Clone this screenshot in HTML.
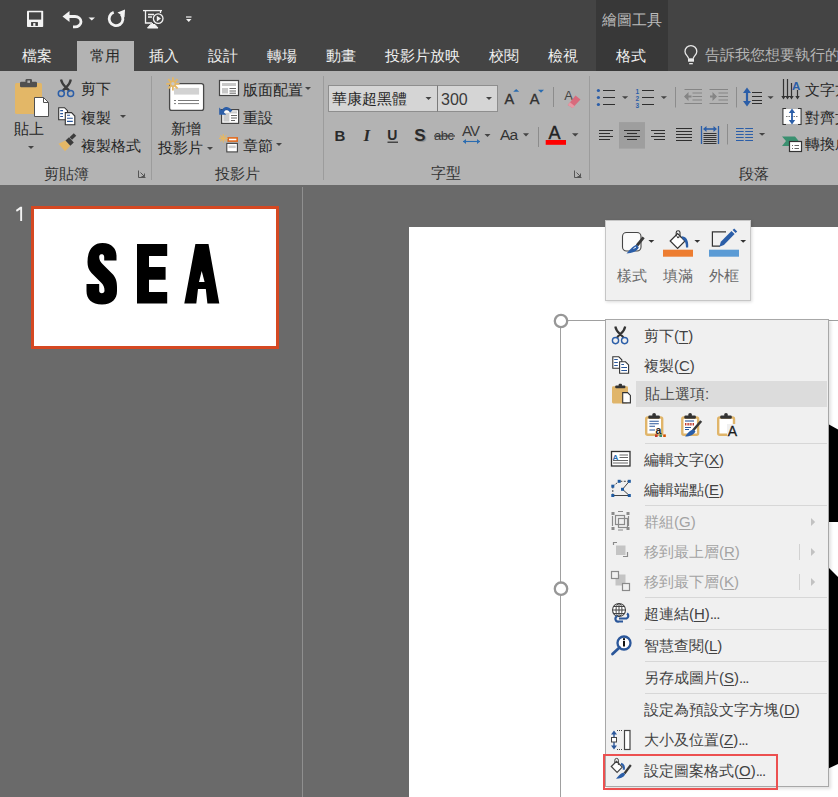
<!DOCTYPE html>
<html><head><meta charset="utf-8">
<style>
html,body{margin:0;padding:0;}
body{width:838px;height:797px;overflow:hidden;position:relative;background:#6a6a6a;font-family:"Liberation Sans",sans-serif;}
.a{position:absolute;}
svg{position:absolute;overflow:visible;}
.tab{position:absolute;top:45px;height:22px;line-height:22px;font-size:15px;color:#f0f0f0;white-space:nowrap;}
.rt{position:absolute;font-size:15px;line-height:20px;color:#262626;white-space:nowrap;}
.gl{position:absolute;font-size:15px;line-height:20px;color:#333;white-space:nowrap;}
.sep{position:absolute;width:1px;background:#9c9c9c;}
.mi{position:absolute;left:644px;margin-top:-1px;font-size:15px;line-height:20px;color:#424242;white-space:nowrap;}
.mi.dis{color:#a3a3a3;}
.dots{letter-spacing:-1px;}
.ms{position:absolute;left:645px;width:182px;height:1px;background:#d7d7d7;}
u{text-decoration:underline;text-underline-offset:2px;}
</style></head><body>
<!-- title bar -->
<div class="a" style="left:0;top:0;width:838px;height:71px;background:#444444"></div>
<div class="a" style="left:596px;top:0;width:72px;height:71px;background:#383838"></div>
<div class="a" style="left:77px;top:41px;width:57px;height:30px;background:#b3b3b3"></div>
<!-- ribbon -->
<div class="a" style="left:0;top:71px;width:838px;height:114px;background:#b3b3b3"></div>
<!-- panel divider -->
<div class="a" style="left:302px;top:187px;width:1px;height:610px;background:#8f8f8f"></div>

<!-- tabs -->
<div class="tab" style="left:22px">檔案</div>
<div class="tab" style="left:90px;color:#262626">常用</div>
<div class="tab" style="left:149px">插入</div>
<div class="tab" style="left:208px">設計</div>
<div class="tab" style="left:267px">轉場</div>
<div class="tab" style="left:326px">動畫</div>
<div class="tab" style="left:385px">投影片放映</div>
<div class="tab" style="left:489px">校閱</div>
<div class="tab" style="left:548px">檢視</div>
<div class="tab" style="left:616px">格式</div>
<div class="a" style="left:602px;top:9px;font-size:15px;line-height:22px;color:#bcbcbc;white-space:nowrap">繪圖工具</div>
<div class="tab" style="left:705px;top:44px;color:#b4b4b4">告訴我您想要執行的</div>


<!-- QAT icons -->
<svg style="left:0;top:0" width="200" height="40">
 <rect x="27" y="10.8" width="16.2" height="16.3" rx="0.8" fill="#f4f4f4"/>
 <rect x="29" y="12.3" width="12.2" height="7.3" fill="#444"/>
 <rect x="31.1" y="22.1" width="6.8" height="3.8" fill="#3a3a3a"/>
 <rect x="33.2" y="23.1" width="2.2" height="2.8" fill="#f4f4f4"/>
 <path d="M62.5 16.5 L69.5 11 L69.5 22 Z" fill="#f2f2f2"/>
 <path d="M68 16.5 H75 A6 5.2 0 0 1 75 26.9 H73" fill="none" stroke="#f2f2f2" stroke-width="2.8"/>
 <path d="M88.5 17.5 H95 L91.75 20.5 Z" fill="#f2f2f2"/>
 <path d="M113.7 12.3 A6.9 6.9 0 1 0 121.2 14.2" fill="none" stroke="#f2f2f2" stroke-width="2.8"/>
 <path d="M117.5 12.5 L125 9.5 L124.5 17.5 Z" fill="#f2f2f2"/>
 <g fill="none" stroke="#f2f2f2" stroke-width="1.3">
  <path d="M143 10.6 H162"/>
  <path d="M145.5 11 V23 H152"/>
  <path d="M160.5 11 V13"/>
  <path d="M148 14.5 H154 M148 17 H152"/>
  <circle cx="158.2" cy="18.6" r="4.8"/>
 </g>
 <path d="M156.8 15.8 L161 18.6 L156.8 21.4 Z" fill="#f2f2f2"/>
 <path d="M152.5 23 V25 M147.5 28 L150.5 24.5 H155 L158 28 Z" fill="#f2f2f2" stroke="#f2f2f2" stroke-width="1"/>
 <path d="M186 17 H191.5" stroke="#f2f2f2" stroke-width="1.2"/>
 <path d="M186 19 H191.5 L188.75 22 Z" fill="#f2f2f2"/>
</svg>

<!-- ribbon: clipboard -->
<div class="rt" style="left:14px;top:119px">貼上</div>
<div class="rt" style="left:81px;top:79px">剪下</div>
<div class="rt" style="left:81px;top:108px">複製</div>
<div class="rt" style="left:81px;top:136px">複製格式</div>
<div class="gl" style="left:44px;top:164px">剪貼簿</div>
<div class="sep" style="left:151px;top:76px;height:104px"></div>
<!-- slides -->
<div class="rt" style="left:171px;top:119px">新增</div>
<div class="rt" style="left:158px;top:138px">投影片</div>
<div class="rt" style="left:243px;top:80px">版面配置</div>
<div class="rt" style="left:243px;top:108px">重設</div>
<div class="rt" style="left:243px;top:136px">章節</div>
<div class="gl" style="left:215px;top:164px">投影片</div>
<div class="sep" style="left:323px;top:76px;height:104px"></div>
<!-- font -->
<div class="a" style="left:328px;top:85px;width:108px;height:25px;border:1px solid #8e8e8e;background:#d5d5d5"></div>
<div class="a" style="left:437px;top:85px;width:59px;height:25px;border:1px solid #8e8e8e;border-left-color:#7a7a7a;background:#d5d5d5"></div>
<div class="rt" style="left:332px;top:89px">華康超黑體</div>
<div class="rt" style="left:441px;top:90px;font-size:16px;color:#3a3a3a">300</div>
<div class="gl" style="left:431px;top:163px">字型</div>
<div class="sep" style="left:589px;top:76px;height:104px"></div>
<!-- paragraph -->
<div class="rt" style="left:805px;top:80px">文字方向</div>
<div class="rt" style="left:805px;top:108px">對齊文字</div>
<div class="rt" style="left:805px;top:134px">轉換成</div>
<div class="gl" style="left:739px;top:164px">段落</div>

<!-- ribbon icons -->
<svg style="left:0;top:70px" width="838" height="115">
 <defs>
  <path id="dd" d="M0 0H6L3 3Z" fill="#444"/>
 </defs>
 <!-- paste -->
 <rect x="15" y="13" width="27" height="31" rx="1.5" fill="#e3b767"/>
 <rect x="20" y="11.8" width="17" height="5.4" rx="1.2" fill="#505050"/>
 <rect x="25.5" y="9" width="6.5" height="4" rx="1.2" fill="#505050"/>
 <rect x="27.4" y="10.5" width="2.6" height="2.4" fill="#b0b0b0"/>
 <path d="M34.5 27.5 H43.5 L48.5 32.5 V46.5 H34.5 Z" fill="#fff" stroke="#505050" stroke-width="1"/>
 <path d="M43.5 27.5 V32.5 H48.5" fill="none" stroke="#505050" stroke-width="1"/>
 <use href="#dd" x="28" y="76"/>
 <!-- scissors -->
 <path d="M61 9.5 Q62 14 66 17.5 Q69 20 69.5 21.5 M70.8 9.5 Q70 14 66 17.5 Q63 20 62.5 21.5" fill="none" stroke="#3c3c3c" stroke-width="2.3"/>
 <circle cx="61.3" cy="23.6" r="3" fill="none" stroke="#2b5ea8" stroke-width="1.5"/>
 <circle cx="70.6" cy="23.6" r="3" fill="none" stroke="#2b5ea8" stroke-width="1.5"/>
 <!-- copy -->
 <path d="M58.7 37.7 H64.5 L67.5 40.7 V49.7 H58.7 Z" fill="#fff" stroke="#333" stroke-width="1.1"/>
 <path d="M60.2 40.6 H63 M60.2 43.6 H63 M60.2 46.5 H63" stroke="#2b579a" stroke-width="1.1"/>
 <path d="M65.3 42.6 H71.5 L74.8 46 V54.7 H65.3 Z" fill="#fff" stroke="#333" stroke-width="1.1"/>
 <path d="M67 45.2 H70 M67 48.2 H72.8 M67 51.4 H72.8" stroke="#2b579a" stroke-width="1.1"/>
 <use href="#dd" x="120" y="45"/>
 <!-- format painter -->
 <path d="M58.5 73.8 L65.5 70.5 L70.3 75.8 L65 81.2 Z" fill="#e3b767"/>
 <path d="M65.5 70.5 L70.3 75.8 L73.8 72.5 L69 67.2 Z" fill="#3c3c3c"/>
 <path d="M70.8 68.5 L75 64.5" stroke="#3c3c3c" stroke-width="3.6"/>
 <!-- launcher -->
 <path d="M138.5 100.5 V107.5 H145.5" fill="none" stroke="#555" stroke-width="1"/>
 <path d="M140.5 102.5 L144.5 106.5 M144.5 103.5 V106.5 H141.5" fill="none" stroke="#555" stroke-width="1"/>

 <!-- new slide -->
 <rect x="169.6" y="13.6" width="34" height="26.8" rx="2.2" fill="#fff" stroke="#484848" stroke-width="1.3"/>
 <rect x="174" y="17.9" width="25.1" height="6.7" fill="#d2d2d2"/>
 <path d="M174 30.5 H176 M178 30.5 H199 M174 33.6 H176 M178 33.6 H199" stroke="#6a6a6a" stroke-width="0.9"/>
 <g stroke="#e3b767" stroke-width="1.8">
  <path d="M172.9 7.2 V20.4 M166.3 13.8 H179.5 M168.2 9.1 L177.6 18.5 M177.6 9.1 L168.2 18.5"/>
 </g>
 <circle cx="172.9" cy="13.8" r="3.2" fill="#e3b767"/>
 <circle cx="172.9" cy="13.8" r="1.7" fill="#c9c9c9"/>
 <use href="#dd" x="207" y="77"/>
 <!-- layout -->
 <rect x="219.5" y="10.5" width="19" height="15" fill="#fff" stroke="#444" stroke-width="1.2"/>
 <rect x="222" y="13" width="14" height="3" fill="#c8c8c8"/>
 <rect x="222" y="18" width="6" height="5.5" fill="#c8c8c8"/>
 <path d="M229.5 18.5 H236 M229.5 21 H236 M229.5 23.2 H236" stroke="#555" stroke-width="0.9"/>
 <use href="#dd" x="305" y="17"/>
 <!-- reset -->
 <rect x="221.6" y="39.6" width="17" height="13.8" fill="#fff" stroke="#444" stroke-width="1.2"/>
 <rect x="223.4" y="42.8" width="6" height="8.8" fill="#cdcdcd"/>
 <rect x="229.4" y="41.3" width="7.6" height="2.2" fill="#cdcdcd"/>
 <path d="M231 45.5 H237 M231 48 H237 M231 50.5 H235" stroke="#555" stroke-width="0.9"/>
 <path d="M222 43 Q225.5 34.5 231.3 41.5" fill="none" stroke="#2b5ea8" stroke-width="2.8"/>
 <path d="M219.2 37.5 V44.8 H226.2 Z" fill="#2b5ea8"/>
 <!-- section -->
 <rect x="228.2" y="67.9" width="9" height="3.2" fill="#fff" stroke="#e06a1e" stroke-width="1.6"/>
 <rect x="226.8" y="73.4" width="10.6" height="8.5" fill="#fff" stroke="#444" stroke-width="1.1"/>
 <rect x="228.5" y="75.5" width="7.2" height="2.6" fill="#cfcfcf"/>
 <g stroke="#e3b767" stroke-width="1.2">
  <path d="M223.3 64 V72.6 M219 68.3 H227.6 M220.3 65.3 L226.3 71.3 M226.3 65.3 L220.3 71.3"/>
 </g>
 <circle cx="223.3" cy="68.3" r="1.8" fill="#e3b767"/>
 <use href="#dd" x="276" y="73"/>
</svg>

<!-- thumbnail -->
<svg style="left:0;top:0" width="40" height="240"><path d="M15.9 209.9 L20.3 206.7 H22.1 V221.1 H20.2 V209.4 L16.8 211.7 Z" fill="#f2f2f2"/></svg>
<div class="a" style="left:31px;top:206px;width:242px;height:137px;border:3px solid #d54822;background:#fff"></div>
<svg style="left:0;top:0" width="300" height="360">
 <path fill="#000" d="M87.5 262 C87.5 250 93 243 102.5 243 C112 243 116.5 249 116.5 256 V260.6 H104.2 V257 C104.2 255 103.2 254.2 101.7 254.2 C100.2 254.2 99.2 255 99.2 257 C99.2 260 100.5 262 103 264.5 L112 273.5 C115.5 277 117 281 117 287 V291 C117 299 112 304.5 102 304.5 C91.5 304.5 86.5 299 86.5 291 V284 H99.2 V290.5 C99.2 292.5 100.2 293.2 101.8 293.2 C103.5 293.2 104.5 292.5 104.5 290.5 C104.5 287 103.5 285 101 282.5 L91.5 273 C88.5 270 87.5 266 87.5 262 Z"/>
 <path fill="#000" d="M137 244 H167.2 V256.1 H149 V267 H165.6 V279.7 H149 V291.9 H167.2 V303.6 H137 Z"/>
 <path fill="#000" fill-rule="evenodd" d="M184.3 303.6 L195.4 244 H208.5 L219.3 303.6 H207.4 L205.8 289 H198 L196.3 303.6 Z M199 282 L201.7 271 L204.6 282 Z"/>
</svg>

<!-- slide -->
<div class="a" style="left:409px;top:227px;width:500px;height:600px;background:#fff"></div>
<svg style="left:0;top:0" width="838" height="797">
 <path d="M829 424.5 L838 429.5 V522 H829 Z" fill="#000"/>
 <path d="M829 568 L838 577 V764 L829 768.3 Z" fill="#000"/>
</svg>
<!-- selection -->
<div class="a" style="left:560px;top:320px;width:300px;height:1px;background:#a0a0a0"></div>
<div class="a" style="left:560px;top:320px;width:1px;height:500px;background:#a0a0a0"></div>
<svg style="left:0;top:0" width="838" height="797">
 <circle cx="561" cy="321" r="6.2" fill="#fff" stroke="#979797" stroke-width="2.3"/>
 <circle cx="561" cy="588.7" r="6.2" fill="#fff" stroke="#979797" stroke-width="2.3"/>
</svg>

<!-- mini toolbar -->
<div class="a" style="left:605px;top:220px;width:144px;height:79px;border:1px solid #c6c6c6;background:#f0f0f0;box-shadow:1px 1px 3px rgba(0,0,0,0.15)"></div>
<div class="a" style="left:617px;top:266px;font-size:15px;line-height:20px;color:#6a6a6a;white-space:nowrap">樣式</div>
<div class="a" style="left:663px;top:266px;font-size:15px;line-height:20px;color:#6a6a6a;white-space:nowrap">填滿</div>
<div class="a" style="left:709px;top:266px;font-size:15px;line-height:20px;color:#6a6a6a;white-space:nowrap">外框</div>

<!-- context menu -->
<div class="a" style="left:605px;top:319px;width:222px;height:466px;border:1px solid #a8a8a8;background:#f0f0f0;box-shadow:2px 2px 3px rgba(0,0,0,0.12)"></div>
<div class="a" style="left:636px;top:381px;width:191px;height:25.5px;background:#dcdcdc"></div>
<div class="mi" style="top:327px">剪下(<u>T</u>)</div>
<div class="mi" style="top:357px">複製(<u>C</u>)</div>
<div class="mi" style="top:385px;left:645px;color:#4a4a4a">貼上選項:</div>
<div class="ms" style="top:443px"></div>
<div class="mi" style="top:451px">編輯文字(<u>X</u>)</div>
<div class="mi" style="top:481px">編輯端點(<u>E</u>)</div>
<div class="ms" style="top:505px"></div>
<div class="mi dis" style="top:513px">群組(<u>G</u>)</div>
<div class="mi dis" style="top:543px">移到最上層(<u>R</u>)</div>
<div class="mi dis" style="top:573px">移到最下層(<u>K</u>)</div>
<div class="ms" style="top:597px"></div>
<div class="mi" style="top:605px">超連結(<u>H</u>)<span class="dots">...</span></div>
<div class="ms" style="top:629px"></div>
<div class="mi" style="top:637px">智慧查閱(<u>L</u>)</div>
<div class="ms" style="top:661px"></div>
<div class="mi" style="top:669px">另存成圖片(<u>S</u>)<span class="dots">...</span></div>
<div class="ms" style="top:693px"></div>
<div class="mi" style="top:701px">設定為預設文字方塊(<u>D</u>)</div>
<div class="mi" style="top:731px">大小及位置(<u>Z</u>)<span class="dots">...</span></div>
<div class="mi" style="top:762px">設定圖案格式(<u>O</u>)<span class="dots">...</span></div>
<div class="a" style="left:603px;top:754px;width:171px;height:32px;border:2px solid #ec5050"></div>

<!-- menu icons -->
<svg style="left:0;top:0" width="838" height="797">
 <!-- mini toolbar -->
 <rect x="622.5" y="232.5" width="18.5" height="18.5" rx="4" fill="#fbfbfb" stroke="#454545" stroke-width="1.1"/>
 <path d="M637 245.5 L643.6 237.3" stroke="#3a3a3a" stroke-width="2.8"/>
 <path d="M637 244.8 C633.5 245.5 631 248.5 626.5 253.6 C632 253.3 636.5 251.5 638.8 247.8 Z" fill="#2b5ea8"/>
 <path d="M633.5 248.5 L636 247" stroke="#fff" stroke-width="1"/>
 <path d="M648.4 240 H654.3 L651.35 242.8 Z" fill="#333"/>
 <path d="M670.2 241 L677.6 233.6 L685 241 L677.6 248.4 Z" fill="#fff" stroke="#333" stroke-width="1.2"/>
 <path d="M676.2 236.5 V232.6 A1.9 1.9 0 0 1 680 232.6 V237.5" fill="none" stroke="#333" stroke-width="1.1"/>
 <circle cx="678" cy="237.2" r="1" fill="#333"/>
 <path d="M681.5 236.3 C686 236.3 688.8 240 688.2 247.6 L686 247.6 C686 243 685 240.5 682.5 239 Z" fill="#2b5ea8"/>
 <rect x="663" y="249.7" width="30" height="7" fill="#ed7d31"/>
 <path d="M694.4 240 H700.2 L697.3 242.8 Z" fill="#333"/>
 <path d="M726 231.8 H712.4 V246.2 H720" fill="none" stroke="#333" stroke-width="1.2"/>
 <path d="M719.4 246.7 L720.8 241.8 L731.5 231 L734.6 234.1 L723.9 244.9 Z" fill="#2b5ea8"/>
 <path d="M732.6 230 L734.2 228.4 L737.2 231.4 L735.6 233" fill="#2b5ea8"/>
 <rect x="709" y="249.7" width="30" height="7" fill="#5b9bd5"/>
 <path d="M740.3 240 H746.1 L743.2 242.8 Z" fill="#333"/>

 <!-- cut -->
 <path d="M615.3 326.5 Q616 330.5 620 334 Q623 336.5 623.5 338 M625.2 326.5 Q624.5 330.5 620.5 334 Q617.5 336.5 617 338" fill="none" stroke="#333" stroke-width="2.2"/>
 <circle cx="615.5" cy="340.6" r="3.1" fill="none" stroke="#2b5ea8" stroke-width="1.4"/>
 <circle cx="624.6" cy="340.6" r="3.1" fill="none" stroke="#2b5ea8" stroke-width="1.4"/>
 <!-- copy -->
 <path d="M612.8 356.8 H618.8 L621.8 359.8 V368.3 H612.8 Z" fill="#fff" stroke="#333" stroke-width="1.1"/>
 <path d="M614.2 359.5 H617.8 M614.2 362.5 H617.8 M614.2 365.5 H617.8" stroke="#2b579a" stroke-width="1.1"/>
 <path d="M619.6 361.8 H625.5 L628.6 364.9 V373.3 H619.6 Z" fill="#fff" stroke="#333" stroke-width="1.1"/>
 <path d="M621.3 364.5 H624 M621.3 367.5 H627 M621.3 370.5 H627" stroke="#2b579a" stroke-width="1.1"/>
 <!-- paste -->
 <rect x="612" y="386.2" width="16" height="17.2" rx="1.3" fill="#e0b56a"/>
 <rect x="615.2" y="385.6" width="10.2" height="2.6" rx="1" fill="#333"/>
 <rect x="618.6" y="383.8" width="3.4" height="2.8" rx="1" fill="#333"/>
 <path d="M622.7 392.6 H627.6 L630.4 395.4 V402.9 H622.7 Z" fill="#fff" stroke="#333" stroke-width="1.1"/>
 <!-- paste options -->
 <g>
  <rect x="646.2" y="417.5" width="16" height="17.2" rx="1.5" fill="#fff" stroke="#e0b56a" stroke-width="2.4"/>
  <rect x="648.3" y="415.6" width="11.6" height="3.2" rx="1.2" fill="#333"/>
  <circle cx="654.1" cy="415" r="1.9" fill="#333"/>
  <path d="M649.4 421.3 H658.8 M649.4 423.8 H658.8 M649.4 426.3 H655 M649.4 430 H655" stroke="#2b579a" stroke-width="1.1"/>
  <text x="655.6" y="433.8" font-family="Liberation Sans" font-weight="bold" font-size="10.5" fill="#222">a</text>
  <rect x="655" y="434.4" width="2.6" height="2.6" fill="#c0392b"/><rect x="659.4" y="434.4" width="2.6" height="2.6" fill="#3d8b6e"/><rect x="663.2" y="434.4" width="2.6" height="2.6" fill="#d35400"/>
 </g>
 <g>
  <rect x="682.3" y="417.5" width="15.8" height="17.2" rx="1.5" fill="#fff" stroke="#e0b56a" stroke-width="2.4"/>
  <rect x="684.3" y="415.6" width="11.6" height="3.2" rx="1.2" fill="#333"/>
  <circle cx="690.1" cy="415" r="1.9" fill="#333"/>
  <path d="M685 421 H694" stroke="#2b579a" stroke-width="1.1"/>
  <path d="M685 424.2 H694" stroke="#c0392b" stroke-width="2.6" stroke-dasharray="1 0.6"/>
  <path d="M685 427.5 H691 M685 429.5 H689" stroke="#2b579a" stroke-width="1.1"/>
  <path d="M693 430.5 L701.2 421" stroke="#3a3a3a" stroke-width="2.6"/>
  <path d="M693.5 429.5 C690 430 688 432.5 685.1 436.5 C690 436.5 694 434.5 695.5 431.5 Z" fill="#2b5ea8"/>
 </g>
 <g>
  <rect x="718.2" y="417.5" width="15.8" height="17.2" rx="1.5" fill="#fff" stroke="#e0b56a" stroke-width="2.4"/>
  <rect x="720.2" y="415.6" width="11.6" height="3.2" rx="1.2" fill="#333"/>
  <circle cx="726" cy="415" r="1.9" fill="#333"/>
  <rect x="727" y="424" width="11" height="13" fill="#f0f0f0"/>
  <text x="727.8" y="435.8" font-family="Liberation Sans" font-size="14" fill="#1a1a1a" stroke="#1a1a1a" stroke-width="0.3">A</text>
 </g>
 <!-- edit text -->
 <rect x="611.5" y="451.5" width="18.5" height="14.5" fill="#fff" stroke="#333" stroke-width="1.3"/>
 <text x="612.5" y="459.5" font-family="Liberation Sans" font-weight="bold" font-size="8" fill="#2b6cb0">A</text>
 <path d="M619.5 455 H628 M619.5 457.5 H628 M613 460.5 H628 M613 463 H628" stroke="#555" stroke-width="0.9"/>
 <!-- edit points -->
 <path d="M612.8 486.2 L619.2 481.3 M629.3 481.3 L619.2 481.3 M612.8 495.5 V486.2" fill="none" stroke="#444" stroke-width="1" stroke-dasharray="2 1.5"/>
 <path d="M629.3 481.3 L622.5 489.3 L629.3 495.5 H612.8" fill="none" stroke="#444" stroke-width="1"/>
 <g fill="#1f5aa0">
  <rect x="611.3" y="484.7" width="3" height="3"/><rect x="617.7" y="479.8" width="3" height="3"/><rect x="627.8" y="479.8" width="3" height="3"/>
  <rect x="621" y="487.8" width="3" height="3"/><rect x="611.3" y="494" width="3" height="3"/><rect x="627.8" y="494" width="3" height="3"/>
 </g>
 <!-- group (disabled) -->
 <g fill="none" stroke="#8a8a8a" stroke-width="1.2">
  <rect x="615.5" y="515.5" width="9" height="9"/>
  <path d="M612.5 516 V526 M618 511.5 H623 M628.5 516 V526 M618 530 H623"/>
  <rect x="618.5" y="518.5" width="9" height="9"/>
 </g>
 <g fill="#8a8a8a">
  <rect x="611.5" y="512" width="3" height="3"/><rect x="626.5" y="512" width="3" height="3"/>
  <rect x="611.5" y="527" width="3" height="3"/><rect x="626.5" y="527" width="3" height="3"/>
 </g>
 <!-- bring to front -->
 <path d="M613.5 545 V542.5 H617" fill="none" stroke="#8a8a8a" stroke-width="1.2"/>
 <path d="M627.5 552 V556.5 H623" fill="none" stroke="#8a8a8a" stroke-width="1.2"/>
 <rect x="616" y="545.5" width="9.5" height="9.5" fill="#c4c4c4"/>
 <!-- send to back -->
 <rect x="615.5" y="574.5" width="10" height="11" fill="#c4c4c4"/>
 <rect x="611.5" y="571.5" width="7" height="7" fill="#f0f0f0" stroke="#8a8a8a" stroke-width="1.2"/>
 <rect x="622.5" y="583.5" width="7" height="7" fill="#f0f0f0" stroke="#8a8a8a" stroke-width="1.2"/>
 <!-- submenu arrows -->
 <g fill="#c2c2c2"><path d="M811 518 L815.2 522 L811 526 Z"/><path d="M811 548 L815.2 552 L811 556 Z"/><path d="M811 578 L815.2 582 L811 586 Z"/></g>
 <path d="M799.5 544 V560 M799.5 574 V590" stroke="#d2d2d2" stroke-width="1"/>
 <!-- hyperlink -->
 <circle cx="619" cy="610" r="6.5" fill="#fff" stroke="#444" stroke-width="1.1"/>
 <path d="M612.5 610 H625.5 M613.5 606.5 H624.5 M613.5 613.5 H624.5 M619 603.5 V616.5" stroke="#444" stroke-width="1"/>
 <ellipse cx="619" cy="610" rx="3" ry="6.5" fill="none" stroke="#444" stroke-width="1"/>
 <path d="M619 618.5 H626 M617.5 616 A2.8 2.8 0 0 0 619 621.5 H623 M627 613.5 A2.8 2.8 0 0 1 626.5 618.5 H622.5" fill="none" stroke="#2b579a" stroke-width="2.2"/>
 <!-- smart lookup -->
 <circle cx="624" cy="643" r="6.5" fill="#fff" stroke="#2b579a" stroke-width="2.3"/>
 <path d="M619.5 647.5 L612.5 654" stroke="#2b579a" stroke-width="2.8" stroke-linecap="round"/>
 <rect x="623" y="641" width="2" height="5.5" fill="#111"/><rect x="623" y="638.2" width="2" height="2" fill="#111"/>
 <!-- size & position -->
 <path d="M614 733 V738 M614 742 V747" stroke="#2b579a" stroke-width="1.4"/>
 <path d="M611 734.5 L614 730.5 L617 734.5 Z M611 745.5 L614 749.5 L617 745.5 Z" fill="#2b579a"/>
 <rect x="611.5" y="737.5" width="5" height="4.5" fill="#fff" stroke="#444" stroke-width="1"/>
 <path d="M617 730.5 H623 M617 749.5 H623" stroke="#444" stroke-width="1" stroke-dasharray="1 1"/>
 <rect x="624.5" y="730.5" width="5.5" height="19" fill="#fff" stroke="#444" stroke-width="1.2"/>
 <!-- format shape -->
 <path d="M611.3 766.5 L616.5 761.3 L622.3 767.1 L617.1 772.3 Z" fill="#fff" stroke="#444" stroke-width="1.2"/>
 <path d="M614.8 763 V760.2 A1.8 1.8 0 0 1 618.4 760.2 V765" fill="none" stroke="#444" stroke-width="1"/>
 <path d="M624.5 773.5 L630.8 765" stroke="#3a3a3a" stroke-width="2.2"/>
 <path d="M623.5 772.5 C620 773.5 618.5 776 616 778.8 C620 778.8 623.5 777.5 625.2 774.5 Z" fill="#2b5ea8"/>
 <path d="M621 763.8 C623.5 764.5 624.5 767 623.6 769.8" fill="none" stroke="#2b5ea8" stroke-width="2"/>
</svg>

<!-- font group icons -->
<svg style="left:0;top:70px" width="838" height="115">
 <path d="M425.5 27 H431.5 L428.5 30 Z" fill="#444"/>
 <path d="M486 27 H492 L489 30 Z" fill="#444"/>
 <!-- grow / shrink -->
 <text x="504.5" y="33.8" font-family="Liberation Sans" font-size="14.5" fill="#303030" stroke="#303030" stroke-width="0.35">A</text>
 <path d="M513.2 21.8 L516.2 19 L519.2 21.8 Z" fill="#2b6cb0"/>
 <text x="529.7" y="33.8" font-family="Liberation Sans" font-size="14.5" fill="#303030" stroke="#303030" stroke-width="0.35">A</text>
 <path d="M538 19.8 H544 L541 22.8 Z" fill="#2b6cb0"/>
 <path d="M553.5 17 V37" stroke="#8c8c8c" stroke-width="1"/>
 <text x="564.3" y="29.5" font-family="Liberation Sans" font-size="13" fill="#444">A</text>
 <path d="M567.8 35 L575.5 25.5 L580.5 29.5 L572.5 38 Z" fill="#d86a7c"/>
 <path d="M567.8 35 L570 32.3 L574.8 36.2 L572.5 38 Z" fill="#e898a4"/>
 <!-- row 2 -->
 <text x="334.6" y="70.5" font-family="Liberation Sans" font-weight="bold" font-size="15" fill="#2a2a2a">B</text>
 <text x="363.5" y="70.8" font-family="Liberation Serif" font-style="italic" font-weight="bold" font-size="17" fill="#2a2a2a">I</text>
 <text x="387.2" y="69.5" font-family="Liberation Sans" font-weight="bold" font-size="14" fill="#2a2a2a">U</text>
 <path d="M387.5 72.2 H398" stroke="#2a2a2a" stroke-width="1.2"/>
 <text x="415.5" y="72" font-family="Liberation Sans" font-weight="bold" font-size="17" fill="#777" opacity="0.55">S</text>
 <text x="414.2" y="70.6" font-family="Liberation Sans" font-weight="bold" font-size="17" fill="#2a2a2a">S</text>
 <text x="434" y="70" font-family="Liberation Sans" font-size="13" fill="#3a3a3a" letter-spacing="-0.5">abc</text>
 <path d="M434 66 H455" stroke="#3a3a3a" stroke-width="1.2"/>
 <text x="462" y="66" font-family="Liberation Sans" font-size="15" fill="#3a3a3a" letter-spacing="-1">AV</text>
 <path d="M463 71.5 H480" stroke="#2b6cb0" stroke-width="1.1"/>
 <path d="M463 71.5 L466 69 V74 Z M480 71.5 L477 69 V74 Z" fill="#2b6cb0"/>
 <path d="M484.5 64 H490.5 L487.5 67 Z" fill="#444"/>
 <text x="500" y="70.2" font-family="Liberation Sans" font-size="15.5" fill="#333" letter-spacing="-0.8">Aa</text>
 <path d="M523 63.3 H529 L526 66.5 Z" fill="#444"/>
 <path d="M538.5 57 V77" stroke="#8c8c8c" stroke-width="1"/>
 <text x="548.5" y="68.9" font-family="Liberation Sans" font-size="18" fill="#222" stroke="#222" stroke-width="0.4">A</text>
 <rect x="545.7" y="70" width="20.3" height="4.8" fill="#ff0000"/>
 <path d="M572 63.3 H578.5 L575.25 66.5 Z" fill="#444"/>
 <!-- launcher -->
 <path d="M574.5 100.5 V107.5 H581.5" fill="none" stroke="#555" stroke-width="1"/>
 <path d="M576.5 102.5 L580.5 106.5 M580.5 103.5 V106.5 H577.5" fill="none" stroke="#555" stroke-width="1"/>
 <!-- paragraph: bullets -->
 <g fill="#2b5ea8"><circle cx="598.4" cy="20.5" r="1.6"/><circle cx="598.4" cy="27.5" r="1.6"/><circle cx="598.4" cy="34.5" r="1.6"/></g>
 <path d="M603 20.5 H615 M603 27.5 H615 M603 34.5 H615" stroke="#2e2e2e" stroke-width="1.05"/>
 <path d="M622 26.3 H628.2 L625.1 29 Z" fill="#444"/>
 <text x="635.6" y="23.6" font-family="Liberation Sans" font-weight="bold" font-size="6.5" fill="#2b5ea8">1</text>
 <text x="635.6" y="30.6" font-family="Liberation Sans" font-weight="bold" font-size="6.5" fill="#2b5ea8">2</text>
 <text x="635.6" y="37.6" font-family="Liberation Sans" font-weight="bold" font-size="6.5" fill="#2b5ea8">3</text>
 <path d="M642 20.5 H654 M642 27.5 H654 M642 34.5 H654" stroke="#2e2e2e" stroke-width="1.05"/>
 <path d="M660.8 26.3 H667 L663.9 29 Z" fill="#444"/>
 <path d="M675.5 17 V37.5" stroke="#8c8c8c" stroke-width="1"/>
 <!-- indents (disabled) -->
 <g stroke="#858585" stroke-width="1.2">
  <path d="M684.5 19.5 H702 M692.5 23 H702 M692.5 26.5 H702 M692.5 30 H702 M684.5 33.5 H702"/>
  <path d="M709.5 19.5 H728 M718.5 23 H728 M718.5 26.5 H728 M718.5 30 H728 M709.5 33.5 H728"/>
 </g>
 <path d="M685 26.5 H691.5 M710 26.5 H715.5" stroke="#858585" stroke-width="2"/>
 <path d="M684 26.5 L688.5 22 V31 Z M717 26.5 L712.5 22 V31 Z" fill="#858585"/>
 <path d="M736.5 17 V37.5" stroke="#8c8c8c" stroke-width="1"/>
 <!-- line spacing -->
 <path d="M747 21 V33" stroke="#2b5ea8" stroke-width="2.2"/>
 <path d="M743 23 L747 17.5 L751 23 Z M743 31 L747 36.5 L751 31 Z" fill="#2b5ea8"/>
 <path d="M752 22.5 H762 M752 26.5 H762 M752 30.5 H762 M752 33.5 H762" stroke="#2e2e2e" stroke-width="1.05"/>
 <path d="M767.5 26.3 H773.7 L770.6 29 Z" fill="#444"/>
 <!-- text direction -->
 <path d="M783.5 9 V27 M787.5 9 V27 M791.5 13 V27 M797.5 20 V27" stroke="#333" stroke-width="1.2"/>
 <text x="792" y="19.5" font-family="Liberation Sans" font-weight="bold" font-size="11.5" fill="#2b5ea8">A</text>
 <path d="M781.3 26 L783.5 29.5 L785.7 26 Z M785.3 26 L787.5 29.5 L789.7 26 Z M789.3 26 L791.5 29.5 L793.7 26 Z M795.3 26 L797.5 29.5 L799.7 26 Z" fill="#333"/>
 <!-- align text -->
 <path d="M786 38.5 H783 V54.5 H786 M798 38.5 H801 V54.5 H798" fill="none" stroke="#333" stroke-width="1.2"/>
 <rect x="783.6" y="39.1" width="16.8" height="14.8" fill="#fff"/>
 <path d="M786 46.5 H798" stroke="#777" stroke-width="1" stroke-dasharray="1.5 1"/>
 <path d="M792 41 V52" stroke="#2b5ea8" stroke-width="1.8"/>
 <path d="M788.8 43 L792 38.5 L795.2 43 Z M788.8 50 L792 54.5 L795.2 50 Z" fill="#2b5ea8"/>
 <!-- smartart -->
 <path d="M782 66.5 H795 L799.5 72 L795 76 H782 L786 71 Z" fill="#3a9070"/>
 <rect x="789.5" y="71.5" width="12" height="10" fill="#fff" stroke="#333" stroke-width="1.2"/>
 <path d="M792 75.5 H793 M794.5 75.5 H799 M792 78.5 H793 M794.5 78.5 H799" stroke="#555" stroke-width="0.9"/>
 <!-- align row -->
 <path d="M599 60.5 H613 M599 63.5 H610 M599 66.5 H613 M599 69.5 H610" stroke="#2e2e2e" stroke-width="1.05"/>
 <rect x="619" y="52.1" width="26" height="26.5" fill="#9e9e9e"/>
 <path d="M624 60.5 H640 M627 63.5 H637 M624 66.5 H640 M627 69.5 H637" stroke="#2e2e2e" stroke-width="1.05"/>
 <path d="M651 60.5 H665 M654 63.5 H665 M651 66.5 H665 M654 69.5 H665" stroke="#2e2e2e" stroke-width="1.05"/>
 <path d="M676 58.5 H692 M676 61.5 H692 M676 64.5 H692 M676 67.5 H692 M676 70.5 H692" stroke="#2e2e2e" stroke-width="1.05"/>
 <path d="M701.5 56 V74 M718.5 56 V74" stroke="#2b5ea8" stroke-width="1.3"/>
 <path d="M705 59 H715" stroke="#2b5ea8" stroke-width="1.6"/>
 <path d="M703 59 L706.5 56 V62 Z M717 59 L713.5 56 V62 Z" fill="#2b5ea8"/>
 <path d="M703.5 63.5 H716.5 M703.5 65.5 H716.5 M703.5 67.5 H716.5 M703.5 69.5 H716.5 M703.5 71.5 H716.5 M703.5 73.5 H716.5" stroke="#333" stroke-width="1.1"/>
 <path d="M727.5 54 V74.5" stroke="#8c8c8c" stroke-width="1"/>
 <path d="M736 58.5 H743.7 M745.2 58.5 H753 M736 61.5 H743.7 M745.2 61.5 H753 M736 64.5 H743.7 M745.2 64.5 H753 M736 67.5 H743.7 M745.2 67.5 H753 M736 70.5 H743.7 M745.2 70.5 H753" stroke="#2b5ea8" stroke-width="1.2"/>
 <path d="M759 63 H765.2 L762.1 65.7 Z" fill="#444"/>
</svg>

<svg style="left:0;top:0" width="838" height="80">
 <path d="M688.6 58.5 C687.5 55.5 685 54.5 685 51.5 A5.9 5.9 0 1 1 696.8 51.5 C696.8 54.5 694.3 55.5 693.2 58.5" fill="none" stroke="#e8e8e8" stroke-width="1.3"/>
 <rect x="688" y="58.3" width="6" height="3.4" fill="#e8e8e8"/>
 <rect x="689.2" y="63" width="3.6" height="1.3" fill="#e8e8e8"/>
</svg>
</body></html>
